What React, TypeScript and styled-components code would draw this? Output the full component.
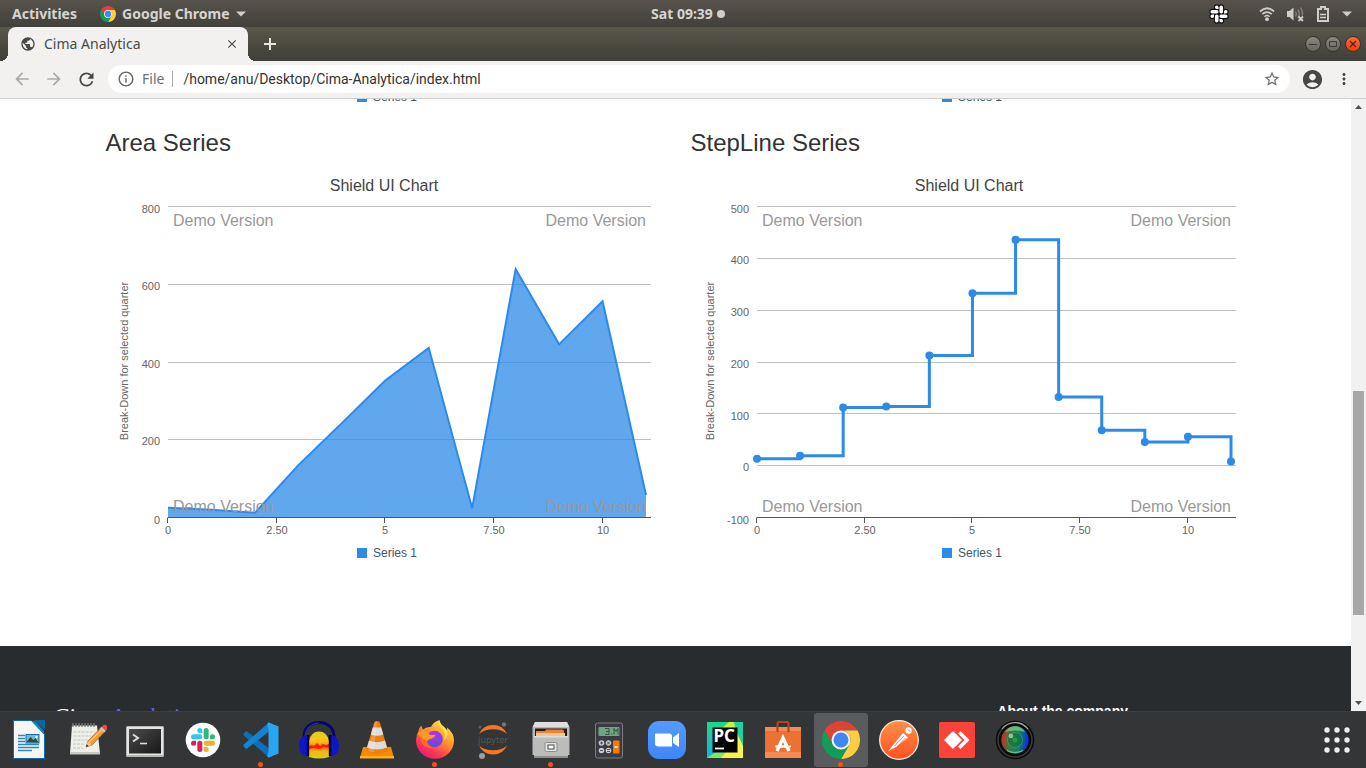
import React from "react";
import styled, { createGlobalStyle } from "styled-components";
import {
  MdAccountCircle,
  MdArrowBack,
  MdArrowForward,
  MdClose,
  MdInfoOutline,
  MdMoreVert,
  MdPublic,
  MdRefresh,
  MdStarBorder,
} from "react-icons/md";

const uiFont = '"Noto Sans", "Open Sans", sans-serif';
const addressFont = 'Roboto, "Noto Sans", sans-serif';
const pageFont = '"Liberation Sans", Arial, sans-serif';
const blue = "#2c8ae8";

const GlobalStyle = createGlobalStyle`
  *, *::before, *::after { box-sizing: border-box; }
  body { margin: 0; background: #fff; overflow: hidden; }
  button { border: 0; padding: 0; background: none; font: inherit; color: inherit; }
  svg { display: block; }
`;

const Desktop = styled.div`
  display: flex;
  flex-direction: column;
  height: 100vh;
  font-family: ${uiFont};
`;

/* ---------- system bar ---------- */

const SystemBar = styled.header`
  flex: none;
  display: grid;
  grid-template-columns: 1fr auto 1fr;
  align-items: center;
  height: 27px;
  padding: 0 14px 0 12px;
  background: linear-gradient(#57534c, #42403b);
  color: #d6d4d0;
  font-size: 14px;
  font-weight: 700;
  line-height: 20px;
  text-shadow: 0 1px 1px #2a2926;
`;

const BarGroup = styled.div<{ $end?: boolean }>`
  display: flex;
  align-items: center;
  justify-content: ${(p) => (p.$end ? "flex-end" : "flex-start")};
  gap: ${(p) => (p.$end ? "12px" : "23px")};
`;

const BarButton = styled.button`
  display: flex;
  align-items: center;
  gap: 6px;
`;

const Clock = styled(BarButton)`
  gap: 4px;
  padding-left: 12px;
`;

const NoticeDot = styled.span`
  width: 8px;
  height: 8px;
  border-radius: 50%;
  background: #d0cecb;
`;

const SlackSlot = styled.span`
  margin-right: 18px;
`;

/* ---------- browser chrome ---------- */

const TabStrip = styled.div`
  flex: none;
  display: flex;
  align-items: center;
  height: 34px;
  padding: 0 5px 0 8px;
  background: linear-gradient(#5a584b, #3f3e39);
`;

const Tab = styled.div`
  position: relative;
  display: flex;
  align-items: center;
  width: 240px;
  height: 34px;
  padding: 0 9px 0 12px;
  border-radius: 8px 8px 0 0;
  background: #f2f1f0;
  color: #4a4a4a;
  font-size: 14px;
  line-height: 20px;

  &::before,
  &::after {
    content: "";
    position: absolute;
    bottom: 0;
    width: 8px;
    height: 8px;
  }
  &::before {
    left: -8px;
    background: radial-gradient(circle at 0 0, transparent 8px, #f2f1f0 8px);
  }
  &::after {
    right: -8px;
    background: radial-gradient(circle at 100% 0, transparent 8px, #f2f1f0 8px);
  }
`;

const TabTitle = styled.span`
  flex: 1;
  margin-left: 8px;
`;

const NewTab = styled.button`
  margin-left: 15px;
`;

const WindowButtons = styled.div`
  display: flex;
  gap: 4px;
  margin-left: auto;
`;

const WindowButton = styled.button<{ $close?: boolean }>`
  display: flex;
  align-items: center;
  justify-content: center;
  width: 16px;
  height: 16px;
  border-radius: 50%;
  border: 1px solid #34332f;
  background: ${(p) =>
    p.$close ? "linear-gradient(#fb6a3b, #ee3f08)" : "linear-gradient(#8a887f, #66645d)"};
  color: ${(p) => (p.$close ? "#5c1c06" : "#3b3a36")};
`;

const Toolbar = styled.div`
  flex: none;
  display: flex;
  align-items: center;
  height: 38px;
  padding: 0 6px 1px;
  background: #f2f1f0;
  border-bottom: 1px solid #cfcecd;
`;

const ToolButton = styled.button<{ $muted?: boolean }>`
  display: flex;
  align-items: center;
  justify-content: center;
  width: 32px;
  height: 28px;
  color: ${(p) => (p.$muted ? "#aaa9a8" : "#474747")};
`;

const AddressBar = styled.form`
  flex: 1;
  display: flex;
  align-items: center;
  height: 28px;
  margin: 0 6px;
  padding: 0 9px;
  border-radius: 14px;
  background: #fff;
  color: #6b6b6b;
  font-size: 14px;
  line-height: 20px;
`;

const Scheme = styled.label`
  margin-left: 7px;
  padding-right: 8px;
  border-right: 1px solid #a9a9a9;
  line-height: 16px;
  color: #6b7078;
`;

const AddressInput = styled.input`
  flex: 1;
  border: 0;
  padding: 0;
  margin-left: 10px;
  outline: 0;
  background: transparent;
  font-family: ${addressFont};
  font-size: 14px;
  line-height: 20px;
  color: #333;
`;

/* ---------- web page ---------- */

const Viewport = styled.div`
  flex: 1;
  min-height: 0;
  display: flex;
`;

const PageClip = styled.div`
  flex: 1;
  overflow: hidden;
  background: #fff;
  font-family: ${pageFont};
  color: #333;
`;

const Page = styled.main`
  margin-top: -12px;
`;

const Container = styled.div`
  display: grid;
  grid-template-columns: 1fr 1fr;
  max-width: 1170px;
  margin: 0 auto;
`;

const Column = styled.section`
  padding: 0 15px;
`;

const SectionTitle = styled.h3`
  margin: 23px 0 10px;
  font-size: 24px;
  font-weight: 400;
  line-height: 26px;
`;

const ChartSvg = styled.svg`
  width: 555px;
  height: 377px;
  max-width: 100%;
`;

const LegendRow = styled.div`
  display: flex;
  align-items: center;
  justify-content: center;
  gap: 6px;
  height: 20px;
  padding-left: 8px;
  font-size: 12px;
  line-height: 14px;
  color: #3e576f;
`;

const Swatch = styled.span`
  width: 10px;
  height: 10px;
  background: ${blue};
`;

const Footer = styled.footer`
  display: flex;
  justify-content: space-between;
  margin-top: 83px;
  padding: 56px 223px 60px 52px;
  background: #282c2f;
  color: #fff;
`;

const Brand = styled.div`
  font-family: "Liberation Serif", serif;
  font-size: 24px;
  font-style: italic;
  line-height: 28px;
`;

const BrandAccent = styled.span`
  color: #5a67d8;
`;

const FooterTitle = styled.div`
  font-size: 14px;
  font-weight: 700;
  line-height: 18px;
`;

const ScrollTrack = styled.div`
  flex: none;
  display: flex;
  flex-direction: column;
  align-items: center;
  width: 15px;
  background: #f1f1f1;
`;

const ScrollArrow = styled.button`
  display: flex;
  align-items: center;
  justify-content: center;
  width: 15px;
  height: 16px;
`;

const ThumbSpace = styled.div<{ $grow: number }>`
  flex: ${(p) => p.$grow} 0 0;
`;

const Thumb = styled.div`
  flex: 224 0 0;
  width: 11px;
  background: #a8a8a8;
`;

/* ---------- dock ---------- */

const DockBar = styled.nav`
  flex: none;
  display: flex;
  align-items: center;
  gap: 4px;
  height: 57px;
  padding: 0 2px 1px;
  border-top: 1px solid #3c3e40;
  background: #333537;
`;

const DockItem = styled.button<{ $active?: boolean }>`
  position: relative;
  display: flex;
  align-items: center;
  justify-content: center;
  width: 54px;
  height: 54px;
  border-radius: 3px;
  background: ${(p) => (p.$active ? "#595b5e" : "transparent")};
`;

const RunningDot = styled.span`
  position: absolute;
  bottom: 0;
  left: 50%;
  width: 5px;
  height: 5px;
  margin-left: -3px;
  border-radius: 50%;
  background: #e95420;
`;

const AppsButton = styled(DockItem)`
  margin-left: auto;
`;

/* ---------- charts ---------- */

const areaValues = [25, 20, 12, 135, 243, 353, 437, 24, 640, 446, 557, 58];
const stepValues = [13.5, 19.5, 112.5, 114.5, 213, 333, 436.5, 133, 68.5, 46, 56, 8];
const xTicks = [0, 2.5, 5, 7.5, 10];

const plotTop = 40.9;
const plotBottom = 351.5;
const plotRight = 545;
const seriesRight = 540;

type ChartProps = {
  kind: "area" | "step";
  values: number[];
  left: number;
  labelRight: number;
  titleX: number;
  min: number;
  max: number;
  step: number;
};

function Chart({ kind, values, left, labelRight, titleX, min, max, step }: ChartProps) {
  const x = (i: number) => left + (i * (seriesRight - left)) / (values.length - 1);
  const y = (v: number) => plotBottom - ((v - min) / (max - min)) * (plotBottom - plotTop);
  const labelY = (v: number) => (v === min ? Math.ceil(y(v)) : Math.floor(y(v) + 0.12)) + 6;
  const rows: number[] = [];
  for (let v = min; v <= max; v += step) rows.push(v);

  const line =
    kind === "area"
      ? "M" + values.map((v, i) => `${x(i)} ${y(v)}`).join("L")
      : values.map((v, i) => (i ? `H${x(i)}V${y(v)}` : `M${x(0)} ${y(v)}`)).join("");

  return (
    <ChartSvg viewBox="0 0 555 377" role="img" aria-label="Shield UI Chart" fontFamily={pageFont}>
      <text x="278" y="25" fontSize="16" fill="#444" textAnchor="middle">
        Shield UI Chart
      </text>
      {rows.map((v) => (
        <g key={v}>
          {v !== min && (
            <path d={`M${left} ${Math.floor(y(v)) + 0.5}H${plotRight}`} stroke="#c0c0c0" />
          )}
          <text x={labelRight} y={labelY(v)} fontSize="11" fill="#666" textAnchor="end">
            {v}
          </text>
        </g>
      ))}
      <text
        transform={`translate(${titleX} 195) rotate(-90)`}
        fontSize="11"
        fill="#666"
        textAnchor="middle"
      >
        Break-Down for selected quarter
      </text>
      {kind === "area" && (
        <path
          d={`${line}V${plotBottom}H${left}Z`}
          fill={blue}
          fillOpacity="0.75"
        />
      )}
      <path d={line} fill="none" stroke={blue} strokeWidth={kind === "area" ? 2 : 3} />
      {kind === "step" && values.map((v, i) => <circle key={i} cx={x(i)} cy={y(v)} r="4" fill={blue} />)}
      <path d={`M${left} ${plotBottom}H${plotRight}`} stroke="#555" />
      {xTicks.map((t) => (
        <g key={t}>
          <path d={`M${Math.round(x(t)) - 0.5} ${plotBottom}v5.500`} stroke="#555" />
          <text x={Math.round(x(t))} y="368" fontSize="11" fill="#666" textAnchor="middle">
            {Number.isInteger(t) ? t : t.toFixed(2)}
          </text>
        </g>
      ))}
      <g fontSize="16" fill="#999">
        <text x={left + 5} y="60">Demo Version</text>
        <text x={seriesRight} y="60" textAnchor="end">Demo Version</text>
        <text x={left + 5} y="346">Demo Version</text>
        <text x={seriesRight} y="346" textAnchor="end">Demo Version</text>
      </g>
    </ChartSvg>
  );
}

function Legend() {
  return (
    <LegendRow>
      <Swatch />
      Series 1
    </LegendRow>
  );
}

/* ---------- icons ---------- */

const slackArm =
  "M8.834 5.042a2.528 2.528 0 0 1-2.521-2.52A2.528 2.528 0 0 1 8.834 0a2.528 2.528 0 0 1 2.521 2.522v2.52H8.834zM8.834 6.313a2.528 2.528 0 0 1 2.521 2.521 2.528 2.528 0 0 1-2.521 2.521H2.522A2.528 2.528 0 0 1 0 8.834a2.528 2.528 0 0 1 2.522-2.521h6.312z";

function SlackMark({ colors }: { colors: string[] }) {
  return (
    <>
      {colors.map((c, i) => (
        <path key={i} d={slackArm} fill={c} transform={`rotate(${i * 90} 12 12)`} />
      ))}
    </>
  );
}

function ChromeLogo({ size }: { size: number }) {
  const blade = "M24 13H43.05A22 22 0 0 0 4.95 13L14.47 29.5A11 11 0 0 1 24 13Z";
  return (
    <svg width={size} height={size} viewBox="2 2 44 44">
      <path d={blade} fill="#db4437" />
      <path d={blade} fill="#ffcd40" transform="rotate(120 24 24)" />
      <path d={blade} fill="#0f9d58" transform="rotate(240 24 24)" />
      <circle cx="24" cy="24" r="11" fill="#f1f1f1" />
      <circle cx="24" cy="24" r="8.6" fill="#4285f4" />
    </svg>
  );
}

const DockSvg = ({ children }: { children: React.ReactNode }) => (
  <svg width="40" height="40" viewBox="0 0 40 40">
    {children}
  </svg>
);

const WriterIcon = () => (
  <DockSvg>
    <path d="M4 0h18l14 14v25H4z" fill="#0b6ca8" />
    <path d="M25 0h11v10z" fill="#0369a3" />
    <path d="M5 1h17.500L35 14.500V38H5z" fill="#f6f6f6" />
    <path d="M22.500 1L35 14.500V11L26 1z" fill="#1583c4" />
    <path d="M9 15.500h7M9 18.500h7M9 21.500h7M9 24.500h21M9 27.500h21M9 30.500h14" stroke="#2f86bd" strokeWidth="1.600" />
    <rect x="17" y="14.500" width="13" height="8.500" fill="#6db7e6" stroke="#1d6f9f" />
    <path d="M17.500 22l4-5 3 3 2-2 3 4.500z" fill="#314d2c" />
    <circle cx="27.500" cy="17" r="1.200" fill="#fff" />
  </DockSvg>
);

const NotesIcon = () => (
  <DockSvg>
    <path d="M5 5.500h25l3 28H3z" fill="#eeeeea" />
    <path d="M3 32h30v2.500H3z" fill="#c9c9c4" />
    <path d="M6 3v4M9 3v4M12 3v4M15 3v4M18 3v4M21 3v4M24 3v4M27 3v4" stroke="#777" strokeWidth="1.300" />
    <path d="M6.500 12h21M6.500 16h18M6.500 20h18M6 24h12M6 28h10" stroke="#c2c2be" strokeDasharray="3 1" />
    <path d="M19 27l2-6L34.500 7l4 4L25 25z" fill="#f29b38" stroke="#a8561a" strokeWidth=".7" />
    <path d="M22 22l14-13.500" stroke="#ffc36e" strokeWidth="1.500" />
    <path d="M34 7.500l2-2q2-1.500 4 .5t0 3.500l-2 2z" fill="#e2504c" />
    <path d="M33 8.500l1.500-1.500 4 4-1.500 1.500z" fill="#c9c9c9" />
    <path d="M19 27l2-6 4 4z" fill="#eac493" />
    <path d="M19 27l.8-2.400 1.700 1.600z" fill="#222" />
  </DockSvg>
);

const TerminalIcon = () => (
  <DockSvg>
    <defs>
      <linearGradient id="term" x1="0" y1="0" x2="1" y2="1">
        <stop offset="0" stopColor="#4c4c4c" />
        <stop offset="1" stopColor="#161616" />
      </linearGradient>
    </defs>
    <rect x="1" y="6" width="38" height="31" rx="1.500" fill="#b5b5b3" />
    <rect x="2" y="7" width="36" height="28" fill="#e4e4e2" />
    <rect x="4" y="9" width="32" height="24.500" fill="url(#term)" />
    <path d="M8 14.500l5 3.500-5 3.500" fill="none" stroke="#ddd" strokeWidth="2" />
    <path d="M15 23.500h7" stroke="#ddd" strokeWidth="1.600" />
  </DockSvg>
);

const SlackIcon = () => (
  <DockSvg>
    <circle cx="20" cy="20" r="17.300" fill="#fff" />
    <g transform="translate(8 8)">
      <SlackMark colors={["#36c5f0", "#2eb67d", "#ecb22e", "#e01e5a"]} />
    </g>
  </DockSvg>
);

const CodeIcon = () => (
  <DockSvg>
    <path d="M2.500 13.500l3-2.500L28 28.500v9L2.800 15.500z" fill="#0a70bd" />
    <path d="M2.500 26.500l3 2.500L28 11.500v-9L2.800 24.500z" fill="#1484cf" />
    <path d="M27.500 2.200l10 4.300v27l-10 4.300-1.500-1.800 1.500-4.500V8.500L26 4z" fill="#2aa5f2" />
  </DockSvg>
);

const AudacityIcon = () => (
  <DockSvg>
    <defs>
      <linearGradient id="wave" x1="0" y1="0" x2="0" y2="1">
        <stop offset="0" stopColor="#d8d023" />
        <stop offset=".35" stopColor="#ffc414" />
        <stop offset=".58" stopColor="#ff7a00" />
        <stop offset=".75" stopColor="#f9b414" />
        <stop offset="1" stopColor="#d6cf22" />
      </linearGradient>
    </defs>
    <path d="M10 37V21q2-9.500 10-9.500T30 21v16q-10 3-20 0z" fill="url(#wave)" />
    <path d="M10 26l3-1 2 1 3-3 3 3 3-2 3 1 3-1v4l-5-1-5 2-5-1-5 1z" fill="#fb1d0a" />
    <path d="M5 20C4 8 11 2.500 20 2.500S36 8 35 20" fill="none" stroke="#06066a" strokeWidth="3" />
    <path d="M6 16C7 8 12 3 20 3" fill="none" stroke="#2a35c0" strokeWidth="1" />
    <path d="M8 15v21q-8-1-8-10.500T8 15z" fill="#0d16c9" />
    <path d="M32 15v21q8-1 8-10.500T32 15z" fill="#0d16c9" />
    <path d="M9 15v21M31 15v21" stroke="#03033a" strokeWidth="2.400" />
  </DockSvg>
);

const VlcIcon = () => (
  <DockSvg>
    <path d="M6 27h28l3 11H3z" fill="#f58a07" />
    <path d="M3 36h34v2.500H3z" fill="#ffb021" />
    <path d="M9 31L17 3q.5-2 3-2t3 2l8 28q-11 5.500-22 0z" fill="#ef7d0d" />
    <path d="M15.800 7.500h8.400l2 7q-6 2.500-12.400 0z" fill="#dcdcdc" />
    <path d="M12 20.500q8 3.500 16 0l2 7q-10 4-20 0z" fill="#dcdcdc" />
    <path d="M18 2h2l-3 30q-4 0-6-1z" fill="#fff" fillOpacity=".2" />
  </DockSvg>
);

const FirefoxIcon = () => (
  <DockSvg>
    <defs>
      <linearGradient id="fox" x1=".85" y1="0" x2=".2" y2="1">
        <stop offset="0" stopColor="#fff44f" />
        <stop offset=".4" stopColor="#ff9a2e" />
        <stop offset=".75" stopColor="#ff3750" />
        <stop offset="1" stopColor="#e31587" />
      </linearGradient>
      <radialGradient id="globe" cx=".5" cy=".2" r=".8">
        <stop offset="0" stopColor="#b833e1" />
        <stop offset="1" stopColor="#5a4de0" />
      </radialGradient>
    </defs>
    <path
      d="M3.500 11q.5-3.500 3-5.500.3 2.500 1.500 4 3-3 8-2.500Q18 2 24.500 0q.5 4 4 6.500 2.500 2 3.500 4.500.3-1.500 0-3.500Q39 13 39 20.500A19 18.300 0 0 1 1 20.500Q1 15 3.500 11z"
      fill="url(#fox)"
    />
    <circle cx="19.500" cy="19" r="8.300" fill="url(#globe)" />
    <path d="M24.500 0q-1 5 3 9t1.500 11q5-5 3-9-1-2.500-3.500-4.500Q25 4 24.500 0z" fill="#ffe24a" />
    <path d="M2.500 14q4-5.500 10-2.500l2.500 3.500h5.500q-1 3-5.500 4-4 2-3 4-4-1-5-4z" fill="#ff9a1f" />
    <path d="M6 16q3 4 6.500 6 1 4.500 6 5.500-7 1.500-10.500-3T6 16z" fill="#ff6a2c" />
  </DockSvg>
);

const JupyterIcon = () => (
  <DockSvg>
    <path d="M6 14Q10 5 20 5T34 14Q29 9.300 20 9.300T6 14z" fill="#f37726" />
    <path d="M6 25.500Q10 34.500 20 34.500T34 25.500Q29 30.200 20 30.200T6 25.500z" fill="#f37726" />
    <circle cx="31" cy="4.500" r="2.200" fill="#767677" />
    <circle cx="7" cy="7" r="1.500" fill="#616262" />
    <circle cx="9" cy="36" r="3" fill="#9e9e9e" />
    <text x="20" y="22.500" fontFamily='"Noto Sans", sans-serif' fontSize="9" textAnchor="middle" fill="#56585a">
      jupyter
    </text>
  </DockSvg>
);

const FilesIcon = () => (
  <DockSvg>
    <path d="M4 2h32l2.500 5v28H1.500V7z" fill="#b9b9b7" />
    <path d="M4 2h32l2 5H2z" fill="#dededc" />
    <rect x="4" y="8.500" width="32" height="10" fill="#2c1a10" />
    <path d="M5 11h9l1-1.500h17l1 1.500v8H5z" fill="#e8843a" />
    <path d="M5 13h29v5H5z" fill="#f7c48a" />
    <path d="M3 16h34v22H3z" fill="#bcbcba" />
    <path d="M3 16h34v1.500H3z" fill="#dcdcda" />
    <path d="M3 36h34v2H3z" fill="#8c8c8a" />
    <rect x="14" y="22.500" width="12" height="9" rx="1.500" fill="#e6e6e4" stroke="#8a8a88" />
    <rect x="17" y="25" width="6" height="4" fill="#fff" stroke="#444" />
  </DockSvg>
);

const CalculatorIcon = () => (
  <DockSvg>
    <rect x="6.500" y="3" width="27" height="35" rx="2" fill="#3a3a45" stroke="#7c7c86" />
    <rect x="9.500" y="7" width="21" height="9" rx="1" fill="#6fa485" />
    <path d="M16 8.500h4v6h-4M17 11.500h3M22 14h1M25 14.500v-6l2 3 2-3v6" fill="none" stroke="#2f5340" />
    <g fill="#c9c9cc">
      <circle cx="12.500" cy="23" r="2.800" />
      <circle cx="19.500" cy="23" r="2.800" />
      <circle cx="12.500" cy="30.500" r="2.800" />
      <circle cx="19.500" cy="30.500" r="2.800" />
    </g>
    <path d="M11 23h3M12.500 21.500v3M18 21.500l3 3M21 21.500l-3 3M11 30.500h3M18 29.500h3M18 31.500h3" stroke="#4a4a52" strokeWidth=".9" />
    <rect x="24" y="20.500" width="6.500" height="13" rx="1" fill="#f57c00" />
    <path d="M25.500 27h3.500" stroke="#fff" strokeWidth="1.500" />
  </DockSvg>
);

const ZoomIcon = () => (
  <DockSvg>
    <defs>
      <linearGradient id="zoom" x1="0" y1="0" x2="0" y2="1">
        <stop offset="0" stopColor="#559bff" />
        <stop offset="1" stopColor="#3d86f7" />
      </linearGradient>
    </defs>
    <rect x="1" y="1" width="38" height="38" rx="11" fill="url(#zoom)" />
    <path d="M9 13.500h13q3 0 3 3v10H11.500q-3.500 0-3.500-3v-9q0-1 1-1z" fill="#fff" />
    <path d="M26 17.500l6-4.500v14l-6-4z" fill="#fff" />
  </DockSvg>
);

const PyCharmIcon = () => (
  <DockSvg>
    <defs>
      <linearGradient id="pyc" x1="0" y1="0" x2="0" y2="1">
        <stop offset="0" stopColor="#21d789" />
        <stop offset="1" stopColor="#12b5e0" />
      </linearGradient>
    </defs>
    <rect x="2" y="2" width="36" height="36" fill="#21d789" />
    <path d="M2 2h18L13 38H2z" fill="url(#pyc)" />
    <path d="M24 2h5l3 7H16z" fill="#c6f03e" />
    <path d="M38 2v22l-6-10-3-12z" fill="#25cfa5" />
    <path d="M32 13l6 13v12H8l8-6h16z" fill="#f8f24b" />
    <path d="M2 38l10-7h10l-6 7z" fill="#7ae86f" />
    <rect x="7.500" y="7.500" width="25" height="25" fill="#050505" />
    <text x="8.500" y="22" fontFamily='"Noto Sans", sans-serif' fontWeight="700" fontSize="17" fill="#fff">
      PC
    </text>
    <path d="M10 28.500h9" stroke="#fff" strokeWidth="1.800" />
  </DockSvg>
);

const SoftwareIcon = () => (
  <DockSvg>
    <path d="M2 7h36v31H2z" fill="#ec7135" />
    <path d="M2 7h36v4H2z" fill="#f28b55" />
    <path d="M2 32h36v6H2z" fill="#f58b52" />
    <path d="M14.500 12V4q0-2 2-2h7q2 0 2 2v8" fill="none" stroke="#b8431b" strokeWidth="2.200" />
    <path d="M14 31l6-13 6 13" fill="none" stroke="#fff" strokeWidth="3.400" />
    <path d="M12.500 26.500h13" stroke="#fff" strokeWidth="2.600" />
    <circle cx="27" cy="26.500" r="1" fill="#fff" />
  </DockSvg>
);

const PostmanIcon = () => (
  <DockSvg>
    <defs>
      <linearGradient id="post" x1="0" y1="0" x2="0" y2="1">
        <stop offset="0" stopColor="#ff9148" />
        <stop offset="1" stopColor="#ff4f22" />
      </linearGradient>
    </defs>
    <circle cx="20" cy="20" r="19.300" fill="url(#post)" stroke="#f6ece6" strokeWidth="1.300" />
    <circle cx="29.500" cy="10.500" r="3.200" fill="#fff" />
    <path d="M9 31.500l5-6.500 10-12 5 4.500L17 27l-4 2z" fill="#fff" />
    <path d="M15.500 26l9.500-10M18 27l8.500-9" stroke="#e2632f" strokeWidth=".8" />
    <path d="M29 9.500l2 2" stroke="#e2632f" />
  </DockSvg>
);

const AnyDeskIcon = () => (
  <DockSvg>
    <rect x="2" y="2" width="36" height="36" rx="2" fill="#fd4237" />
    <path d="M7 20l9-9 9 9-9 9z" fill="#fff" />
    <path d="M21 13.500l2.500-2.500 9 9-9 9-2.500-2.500 6.500-6.500z" fill="#fff" />
  </DockSvg>
);

const LensIcon = () => (
  <DockSvg>
    <defs>
      <linearGradient id="lens" x1="0" y1=".4" x2="1" y2=".5">
        <stop offset="0" stopColor="#e01f1f" />
        <stop offset=".28" stopColor="#3d7a46" />
        <stop offset=".65" stopColor="#157f63" />
        <stop offset="1" stopColor="#1026e8" />
      </linearGradient>
    </defs>
    <circle cx="20" cy="20" r="19.300" fill="#0b0b0b" />
    <circle cx="20" cy="20" r="17" fill="none" stroke="#3c3c3c" strokeWidth="1.500" />
    <path d="M7 9Q12 2.500 20 2.500T33 9" fill="none" stroke="#a9a9a9" strokeWidth="1.200" />
    <circle cx="20" cy="20" r="13.700" fill="url(#lens)" />
    <path d="M10 12q4-6 10-6t10 6q-10-3-20 0z" fill="#8fe39c" fillOpacity=".6" />
    <circle cx="20" cy="20" r="7" fill="#0a6a2c" fillOpacity=".45" />
    <circle cx="20" cy="20" r="7.500" fill="none" stroke="#3fb86b" strokeOpacity=".6" strokeWidth=".8" />
    <circle cx="20" cy="20" r="2.500" fill="#1f9b46" />
    <circle cx="16" cy="16" r="2.300" fill="#b5f0c0" fillOpacity=".7" />
    <path d="M12 30.500q8 4 16 0" stroke="#7fc5a0" strokeWidth="1" fill="none" />
  </DockSvg>
);

const GridIcon = () => (
  <svg width="28" height="28" viewBox="0 0 28 28" fill="#eeeeec">
    {[4, 14, 24].map((cy) => [4, 14, 24].map((cx) => <circle key={`${cx}-${cy}`} cx={cx} cy={cy} r="2.700" />))}
  </svg>
);

const Caret = () => (
  <svg width="10" height="6" viewBox="0 0 10 6">
    <path d="M0 .5h10L5 5.500z" fill="#cfcdca" />
  </svg>
);

const WifiIcon = () => (
  <svg width="16" height="16" viewBox="0 0 16 16" fill="none" stroke="#cfcdca" strokeWidth="1.800">
    <path d="M1 5.500Q8-1 15 5.500" />
    <path d="M3.300 8.200Q8 4 12.700 8.200" />
    <path d="M5.400 10.700Q8 8.500 10.600 10.700" strokeWidth="1.400" />
    <circle cx="8" cy="13.200" r="1.900" fill="#cfcdca" stroke="none" />
  </svg>
);

const VolumeIcon = () => (
  <svg width="17" height="16" viewBox="0 0 17 16">
    <path d="M0 5h2.500L6.500 1.500v13L2.500 11H0z" fill="#cfcdca" />
    <path d="M8.500 5.500q1.500 2.500 0 5M11 3.500q2.500 4.500 0 8.500M13.500 1.500q3 5 1.500 8" fill="none" stroke="#85827d" strokeWidth="1.400" />
    <path d="M11.500 10.500l4.500 4.500M16 10.500L11.500 15" stroke="#cfcdca" strokeWidth="1.800" />
  </svg>
);

const BatteryIcon = () => (
  <svg width="14" height="16" viewBox="0 0 14 16">
    <path d="M2 3h3V1h4v2h3v12H2z" fill="none" stroke="#cfcdca" strokeWidth="2" />
    <path d="M4 8.500h6M4 11.500h6" stroke="#cfcdca" strokeWidth="1.600" />
  </svg>
);

type App = { name: string; icon: React.ReactNode; running?: boolean; active?: boolean };

const apps: App[] = [
  { name: "LibreOffice Writer", icon: <WriterIcon /> },
  { name: "Text Editor", icon: <NotesIcon /> },
  { name: "Terminal", icon: <TerminalIcon /> },
  { name: "Slack", icon: <SlackIcon /> },
  { name: "Visual Studio Code", icon: <CodeIcon />, running: true },
  { name: "Audacity", icon: <AudacityIcon /> },
  { name: "VLC", icon: <VlcIcon /> },
  { name: "Firefox", icon: <FirefoxIcon />, running: true },
  { name: "Jupyter", icon: <JupyterIcon /> },
  { name: "Files", icon: <FilesIcon />, running: true },
  { name: "Calculator", icon: <CalculatorIcon /> },
  { name: "Zoom", icon: <ZoomIcon /> },
  { name: "PyCharm", icon: <PyCharmIcon /> },
  { name: "Ubuntu Software", icon: <SoftwareIcon /> },
  { name: "Google Chrome", icon: <ChromeLogo size={38} />, running: true, active: true },
  { name: "Postman", icon: <PostmanIcon /> },
  { name: "AnyDesk", icon: <AnyDeskIcon /> },
  { name: "Camera", icon: <LensIcon /> },
];

export default function App() {
  return (
    <Desktop>
      <GlobalStyle />
      <SystemBar>
        <BarGroup>
          <BarButton>Activities</BarButton>
          <BarButton>
            <ChromeLogo size={16} />
            Google Chrome
            <Caret />
          </BarButton>
        </BarGroup>
        <Clock>
          Sat 09:39
          <NoticeDot />
        </Clock>
        <BarGroup $end>
          <SlackSlot>
            <svg width="20" height="20" viewBox="-2 -2 28 28">
              <g stroke="#111" strokeWidth="3">
                <SlackMark colors={["#fff", "#fff", "#fff", "#fff"]} />
              </g>
              <SlackMark colors={["#fff", "#fff", "#fff", "#fff"]} />
            </svg>
          </SlackSlot>
          <WifiIcon />
          <VolumeIcon />
          <BatteryIcon />
          <Caret />
        </BarGroup>
      </SystemBar>

      <TabStrip>
        <Tab>
          <MdPublic size={16} color="#474747" />
          <TabTitle>Cima Analytica</TabTitle>
          <button aria-label="Close tab">
            <MdClose size={14} />
          </button>
        </Tab>
        <NewTab aria-label="New tab">
          <svg width="14" height="14" viewBox="0 0 14 14">
            <path d="M7 1v12M1 7h12" stroke="#e6e5e2" strokeWidth="2" />
          </svg>
        </NewTab>
        <WindowButtons>
          <WindowButton aria-label="Minimize">
            <svg width="8" height="8" viewBox="0 0 8 8">
              <path d="M0 4.500h8" stroke="currentColor" />
            </svg>
          </WindowButton>
          <WindowButton aria-label="Maximize">
            <svg width="8" height="8" viewBox="0 0 8 8">
              <path d="M.5 1.500h7v5h-7z" fill="none" stroke="currentColor" />
            </svg>
          </WindowButton>
          <WindowButton $close aria-label="Close">
            <svg width="8" height="8" viewBox="0 0 8 8">
              <path d="M1 1l6 6M7 1L1 7" stroke="currentColor" strokeWidth="1.300" />
            </svg>
          </WindowButton>
        </WindowButtons>
      </TabStrip>

      <Toolbar>
        <ToolButton $muted aria-label="Back">
          <MdArrowBack size={20} />
        </ToolButton>
        <ToolButton $muted aria-label="Forward">
          <MdArrowForward size={20} />
        </ToolButton>
        <ToolButton aria-label="Reload">
          <MdRefresh size={21} />
        </ToolButton>
        <AddressBar onSubmit={(e) => e.preventDefault()}>
          <MdInfoOutline size={18} />
          <Scheme htmlFor="address">File</Scheme>
          <AddressInput
            id="address"
            defaultValue="/home/anu/Desktop/Cima-Analytica/index.html"
            spellCheck={false}
          />
          <button type="button" aria-label="Bookmark">
            <MdStarBorder size={18} />
          </button>
        </AddressBar>
        <ToolButton aria-label="Profile">
          <MdAccountCircle size={23} />
        </ToolButton>
        <ToolButton aria-label="Menu">
          <MdMoreVert size={18} />
        </ToolButton>
      </Toolbar>

      <Viewport>
        <PageClip>
          <Page>
            <Container>
              <Column>
                <Legend />
              </Column>
              <Column>
                <Legend />
              </Column>
            </Container>
            <Container>
              <Column>
                <SectionTitle>Area Series</SectionTitle>
                <Chart
                  kind="area"
                  values={areaValues}
                  left={62}
                  labelRight={54}
                  titleX={22}
                  min={0}
                  max={800}
                  step={200}
                />
                <Legend />
              </Column>
              <Column>
                <SectionTitle>StepLine Series</SectionTitle>
                <Chart
                  kind="step"
                  values={stepValues}
                  left={66}
                  labelRight={58}
                  titleX={23}
                  min={-100}
                  max={500}
                  step={100}
                />
                <Legend />
              </Column>
            </Container>
            <Footer>
              <Brand>
                Cima <BrandAccent>Analytica</BrandAccent>
              </Brand>
              <FooterTitle>About the company</FooterTitle>
            </Footer>
          </Page>
        </PageClip>
        <ScrollTrack>
          <ScrollArrow aria-label="Scroll up">
            <svg width="7" height="4" viewBox="0 0 7 4">
              <path d="M0 4L3.500 0 7 4z" fill="#505050" />
            </svg>
          </ScrollArrow>
          <ThumbSpace $grow={276} />
          <Thumb />
          <ThumbSpace $grow={80} />
          <ScrollArrow aria-label="Scroll down">
            <svg width="7" height="4" viewBox="0 0 7 4">
              <path d="M0 0h7L3.500 4z" fill="#505050" />
            </svg>
          </ScrollArrow>
        </ScrollTrack>
      </Viewport>

      <DockBar>
        {apps.map((app) => (
          <DockItem key={app.name} $active={app.active} aria-label={app.name}>
            {app.icon}
            {app.running && <RunningDot />}
          </DockItem>
        ))}
        <AppsButton aria-label="Show applications">
          <GridIcon />
        </AppsButton>
      </DockBar>
    </Desktop>
  );
}
